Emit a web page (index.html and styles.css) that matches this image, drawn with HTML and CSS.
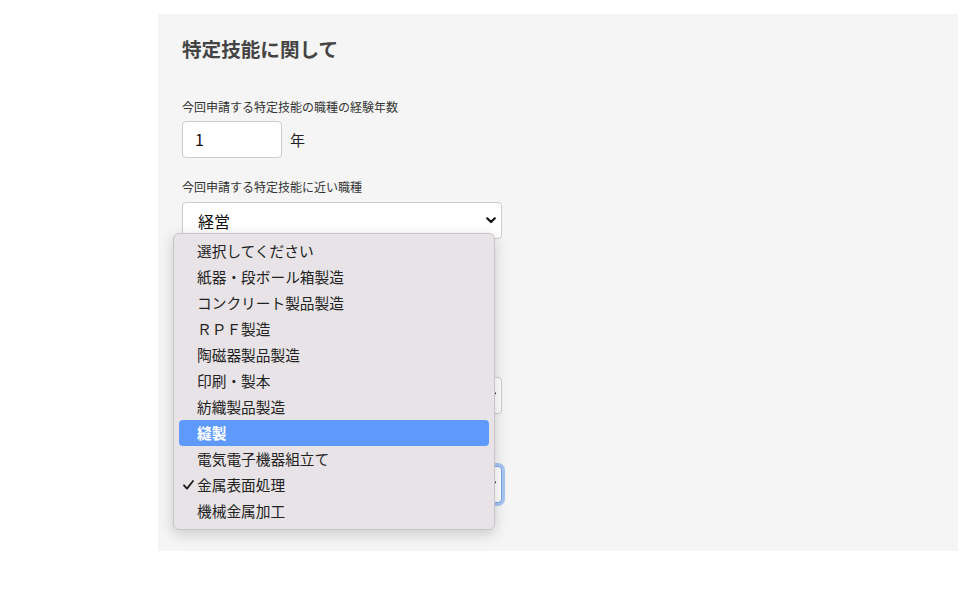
FILE: index.html
```html
<!DOCTYPE html>
<html lang="ja">
<head>
<meta charset="utf-8">
<link rel="stylesheet" href="styles.css">
</head>
<body>
<div class="page">
  <section class="panel">
    <h2 class="title">特定技能に関して</h2>

    <div class="group g1">
      <label class="label">今回申請する特定技能の職種の経験年数</label>
      <div class="row">
        <div class="input">1</div>
        <span class="unit">年</span>
      </div>
    </div>

    <div class="group g2">
      <label class="label">今回申請する特定技能に近い職種</label>
      <div class="select">
        <span>経営</span>
        <svg class="chev" width="10" height="7" viewBox="0 0 10 7"><path d="M1.2 1.3 L5 5 L8.8 1.3" fill="none" stroke="#111" stroke-width="2.2" stroke-linecap="round" stroke-linejoin="round"/></svg>
      </div>
    </div>

    <div class="group g3">
      <div class="label-space"></div>
      <div class="row">
        <div class="input"></div>
      </div>
    </div>

    <div class="group g4">
      <div class="label-space"></div>
      <div class="select">
        <span></span>
        <svg class="chev" width="10" height="7" viewBox="0 0 10 7"><path d="M1.2 1.3 L5 5 L8.8 1.3" fill="none" stroke="#111" stroke-width="2.2" stroke-linecap="round" stroke-linejoin="round"/></svg>
      </div>
    </div>

    <div class="group g5">
      <div class="label-space"></div>
      <div class="select focused">
        <span></span>
        <svg class="chev" width="10" height="7" viewBox="0 0 10 7"><path d="M1.2 1.3 L5 5 L8.8 1.3" fill="none" stroke="#111" stroke-width="2.2" stroke-linecap="round" stroke-linejoin="round"/></svg>
      </div>
    </div>
  </section>

  <ul class="menu">
    <li class="item">選択してください</li>
    <li class="item">紙器・段ボール箱製造</li>
    <li class="item">コンクリート製品製造</li>
    <li class="item">ＲＰＦ製造</li>
    <li class="item">陶磁器製品製造</li>
    <li class="item">印刷・製本</li>
    <li class="item">紡織製品製造</li>
    <li class="item active">縫製</li>
    <li class="item">電気電子機器組立て</li>
    <li class="item checked"><svg class="check" width="11" height="10" viewBox="0 0 11 10"><path d="M1 5.3 L4 8.6 L10 1" fill="none" stroke="#1a1a1a" stroke-width="1.8" stroke-linecap="round" stroke-linejoin="round"/></svg>金属表面処理</li>
    <li class="item">機械金属加工</li>
  </ul>
</div>
</body>
</html>
```

FILE: styles.css
```css
* { box-sizing: border-box; }
html, body { margin: 0; padding: 0; background: #ffffff; }
body {
  font-family: "Noto Sans CJK JP", "Noto Sans", sans-serif;
  color: #222;
  width: 965px;
  height: 599px;
  overflow: hidden;
}
.page {
  position: relative;
  padding: 14px 0 0 158px;
}
.panel {
  width: 800px;
  height: 537px;
  background: #f5f5f5;
  padding: 21px 24px 0 24px;
}
.title {
  margin: 0;
  font-size: 19.6px;
  line-height: 28px;
  font-weight: 700;
  color: #444;
}
.group { display: flex; flex-direction: column; }
.label {
  font-size: 12px;
  line-height: 18px;
  color: #333;
}
.label-space { height: 18px; }
.g1 { margin-top: 35px; }
.g1 .label { margin-bottom: 5px; }
.g2 { margin-top: 20px; }
.g2 .label { margin-bottom: 6px; }
.g3 { margin-top: 20px; }
.g3 .label-space { margin-bottom: 6px; }
.g4 { margin-top: 33px; }
.g4 .label-space { margin-bottom: 6px; }
.g5 { margin-top: 28px; }
.g5 .label-space { margin-bottom: 6px; }

.row { display: flex; align-items: center; gap: 8px; }
.input {
  width: 100px;
  height: 37px;
  background: #fff;
  border: 1px solid #cccccc;
  border-radius: 4px;
  padding: 0 12px;
  font-size: 16px;
  line-height: 35px;
  color: #111;
}
.unit { font-size: 15px; color: #222; }
.select {
  width: 320px;
  height: 37px;
  background: #fff;
  border: 1px solid #cccccc;
  border-radius: 4px;
  padding: 0 5px 0 15px;
  display: flex;
  align-items: center;
  justify-content: space-between;
  font-size: 16px;
  color: #111;
}
.select.focused {
  border-color: #7aa7ee;
  box-shadow: 0 0 0 3px #a9c5f2;
}
.chev { display: block; }

.menu {
  position: absolute;
  left: 173px;
  top: 233px;
  width: 322px;
  margin: 0;
  padding: 4px 5px 5px 5px;
  list-style: none;
  background: #e8e3e6;
  border: 1px solid #c9c4c7;
  border-radius: 6px;
  box-shadow: 0 4px 14px rgba(0, 0, 0, 0.18);
}
.item {
  position: relative;
  height: 26px;
  line-height: 25px;
  padding-left: 18px;
  font-size: 14.7px;
  color: #222;
  border-radius: 4px;
  white-space: nowrap;
}
.item.active {
  background: #5d9afb;
  color: #ffffff;
  font-weight: 700;
}
.check {
  position: absolute;
  left: 4px;
  top: 8px;
}
```
